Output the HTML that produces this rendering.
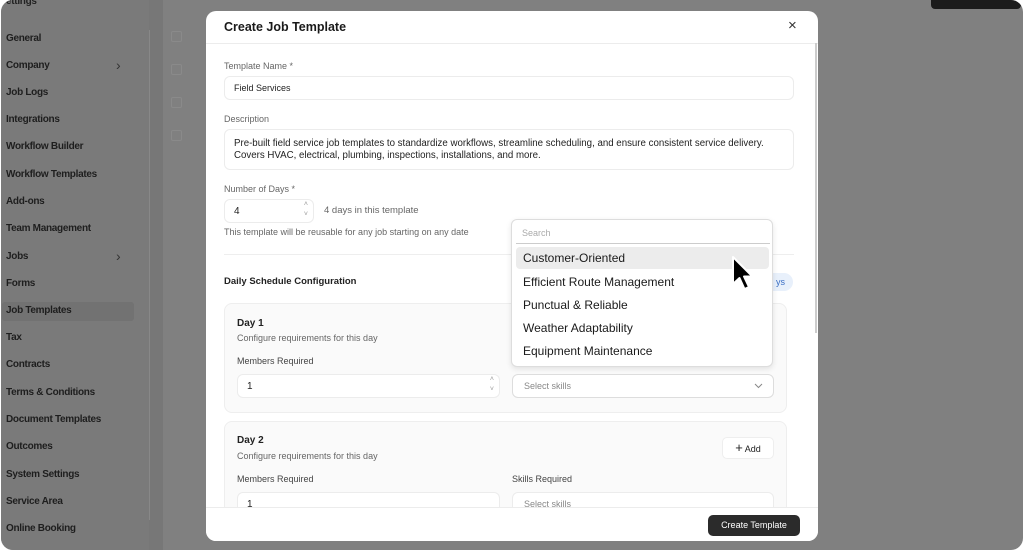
<!DOCTYPE html>
<html><head><style>
*{box-sizing:border-box;margin:0;padding:0}
body{width:1024px;height:551px;background:#fff;font-family:"Liberation Sans",sans-serif;position:relative;overflow:hidden}
.frame{position:absolute;left:1px;top:0;width:1022px;height:550px;border-radius:12px;overflow:hidden;background:#808080}
.side{position:absolute;left:0;top:0;width:148px;height:100%;background:#7a7a7a}
.strip{position:absolute;left:148px;top:0;width:14px;height:100%;background:#777}
.strip:after{content:"";position:absolute;left:0;top:30px;width:1px;height:490px;background:#888}
.nav{position:absolute;left:5px;font-size:10px;font-weight:bold;color:#1e1e1e;letter-spacing:-0.3px}
.chev{position:absolute;left:115px;font-size:14px;color:#333;line-height:12px}
.sel{position:absolute;left:1px;top:302px;width:132px;height:19px;background:#727272;border-radius:3px}
.cb{position:absolute;left:170px;width:11px;height:11px;border:1px solid #8a8a8a;border-radius:2px}
.modal{position:absolute;left:206px;top:11px;width:612px;height:530px;background:#fff;border-radius:10px;overflow:hidden}
.hdr{position:absolute;left:0;top:0;width:100%;height:33px;border-bottom:1px solid #ececec}
.title{position:absolute;left:18px;top:9px;font-size:12.5px;font-weight:bold;color:#1a1a1a}
.x{position:absolute;left:582px;top:6px;font-size:15px;color:#333}
.lbl{position:absolute;font-size:9px;color:#666}
.inp{position:absolute;border:1px solid #ececec;border-radius:6px;background:#fff;font-size:9px;color:#222}
.footer{position:absolute;left:0;top:496px;width:100%;height:34px;border-top:1px solid #ececec;background:#fff}
.btn{position:absolute;left:502px;top:7px;width:92px;height:21px;background:#2b2b2b;border-radius:5px;color:#fff;font-size:9px;text-align:center;line-height:21px}
.card{position:absolute;left:18px;width:563px;border:1px solid #eee;border-radius:8px;background:#fafafa}
.dd{position:absolute;left:511px;top:219px;width:262px;height:148px;background:#fff;border:1px solid #ddd;border-radius:6px;box-shadow:0 2px 6px rgba(0,0,0,.1)}
.opt{position:absolute;left:11px;font-size:12px;color:#1a1a1a}
.scroll{position:absolute;left:815px;top:43px;width:2px;height:290px;background:#ccc}
</style></head><body>
<div class="frame">
<div class="side">
<div class="nav" style="top:-4px;color:#222">ettings</div>
<div class="sel"></div>
<div class="nav" style="top:33px">General</div>
<div class="nav" style="top:60px">Company</div><div class="chev" style="top:59px">›</div>
<div class="nav" style="top:87px">Job Logs</div>
<div class="nav" style="top:114px">Integrations</div>
<div class="nav" style="top:141px">Workflow Builder</div>
<div class="nav" style="top:169px">Workflow Templates</div>
<div class="nav" style="top:196px">Add-ons</div>
<div class="nav" style="top:223px">Team Management</div>
<div class="nav" style="top:251px">Jobs</div><div class="chev" style="top:250px">›</div>
<div class="nav" style="top:278px">Forms</div>
<div class="nav" style="top:305px">Job Templates</div>
<div class="nav" style="top:332px">Tax</div>
<div class="nav" style="top:359px">Contracts</div>
<div class="nav" style="top:387px">Terms &amp; Conditions</div>
<div class="nav" style="top:414px">Document Templates</div>
<div class="nav" style="top:441px">Outcomes</div>
<div class="nav" style="top:469px">System Settings</div>
<div class="nav" style="top:496px">Service Area</div>
<div class="nav" style="top:523px">Online Booking</div>
</div>
<div class="strip"></div>
<div class="cb" style="top:31px"></div><div class="cb" style="top:64px"></div><div class="cb" style="top:97px"></div><div class="cb" style="top:130px"></div>
<div style="position:absolute;left:930px;top:-4px;width:90px;height:13px;background:#1c1c1c;border-radius:4px"></div>
</div>

<div class="modal">
<div class="hdr"><div class="title">Create Job Template</div><div class="x">×</div></div>
<div class="lbl" style="left:18px;top:50px">Template Name *</div>
<div class="inp" style="left:18px;top:65px;width:570px;height:24px;padding:6px 9px">Field Services</div>
<div class="lbl" style="left:18px;top:103px">Description</div>
<div class="inp" style="left:18px;top:118px;width:570px;height:41px;padding:8px 9px;line-height:12px;font-size:9.7px">Pre-built field service job templates to standardize workflows, streamline scheduling, and ensure consistent service delivery. Covers HVAC, electrical, plumbing, inspections, installations, and more.</div>
<div class="lbl" style="left:18px;top:173px">Number of Days *</div>
<div class="inp" style="left:18px;top:188px;width:90px;height:24px;padding:6px 9px;font-size:10px">4<span style="position:absolute;right:5px;top:0;font-size:7px;color:#999;line-height:10px">˄<br>˅</span></div>
<div class="lbl" style="left:118px;top:194px;font-size:9.5px">4 days in this template</div>
<div class="lbl" style="left:18px;top:216px">This template will be reusable for any job starting on any date</div>
<div style="position:absolute;left:18px;top:243px;width:570px;height:1px;background:#eee"></div>
<div style="position:absolute;left:18px;top:265px;font-size:9.5px;font-weight:bold;color:#222">Daily Schedule Configuration</div>
<div style="position:absolute;left:545px;top:262px;width:42px;height:18px;border-radius:9px;background:#e8f0fb;color:#3b6fc4;font-size:9px;line-height:18px;text-align:right;padding-right:8px">ys</div>
<div class="card" style="top:292px;height:110px">
<div style="position:absolute;left:12px;top:14px;font-size:10px;font-weight:bold;color:#222">Day 1</div>
<div class="lbl" style="left:12px;top:29px">Configure requirements for this day</div>
<div class="lbl" style="left:12px;top:52px;color:#444">Members Required</div>
<div class="inp" style="left:12px;top:70px;width:263px;height:24px;padding:6px 9px;font-size:10px">1<span style="position:absolute;right:5px;top:0;font-size:7px;color:#999;line-height:10px">˄<br>˅</span></div>
<div class="inp" style="left:287px;top:70px;width:262px;height:24px;padding:6px 11px;color:#888;border-color:#ddd">Select skills<svg style="position:absolute;right:10px;top:8px" width="9" height="6" viewBox="0 0 9 6"><path d="M1 1 L4.5 4.5 L8 1" fill="none" stroke="#888" stroke-width="1"/></svg></div>
</div>
<div class="card" style="top:410px;height:100px">
<div style="position:absolute;left:12px;top:13px;font-size:10px;font-weight:bold;color:#222">Day 2</div>
<div class="lbl" style="left:12px;top:29px">Configure requirements for this day</div>
<div style="position:absolute;left:497px;top:15px;width:52px;height:22px;background:#fff;border:1px solid #eee;border-radius:5px;font-size:9px;line-height:20px;text-align:center;color:#222"><span style="font-size:13px">+</span> Add</div>
<div class="lbl" style="left:12px;top:52px;color:#444">Members Required</div>
<div class="lbl" style="left:287px;top:52px;color:#444">Skills Required</div>
<div class="inp" style="left:12px;top:70px;width:263px;height:24px;padding:6px 9px;font-size:10px">1</div>
<div class="inp" style="left:287px;top:70px;width:262px;height:24px;padding:6px 11px;color:#888">Select skills</div>
</div>
<div class="footer"><div class="btn">Create Template</div></div>
</div>
<div class="scroll"></div>

<div class="dd">
<div style="position:absolute;left:10px;top:8px;font-size:9px;color:#aaa">Search</div>
<div style="position:absolute;left:4px;top:23px;width:254px;height:1px;background:#ccc"></div>
<div style="position:absolute;left:4px;top:27px;width:253px;height:22px;background:#ececec;border-radius:4px"></div>
<div class="opt" style="top:31px">Customer-Oriented</div>
<div class="opt" style="top:55px">Efficient Route Management</div>
<div class="opt" style="top:78px">Punctual &amp; Reliable</div>
<div class="opt" style="top:101px">Weather Adaptability</div>
<div class="opt" style="top:124px">Equipment Maintenance</div>
</div>
<svg style="position:absolute;left:730px;top:255px" width="28" height="38" viewBox="0 0 28 38"><path d="M3 2 L3 29 L9.5 23 L14.5 34 L19 32 L14 21.5 L22.5 21.5 Z" fill="#000" stroke="#fff" stroke-width="2" stroke-linejoin="round"/></svg>
</body></html>
